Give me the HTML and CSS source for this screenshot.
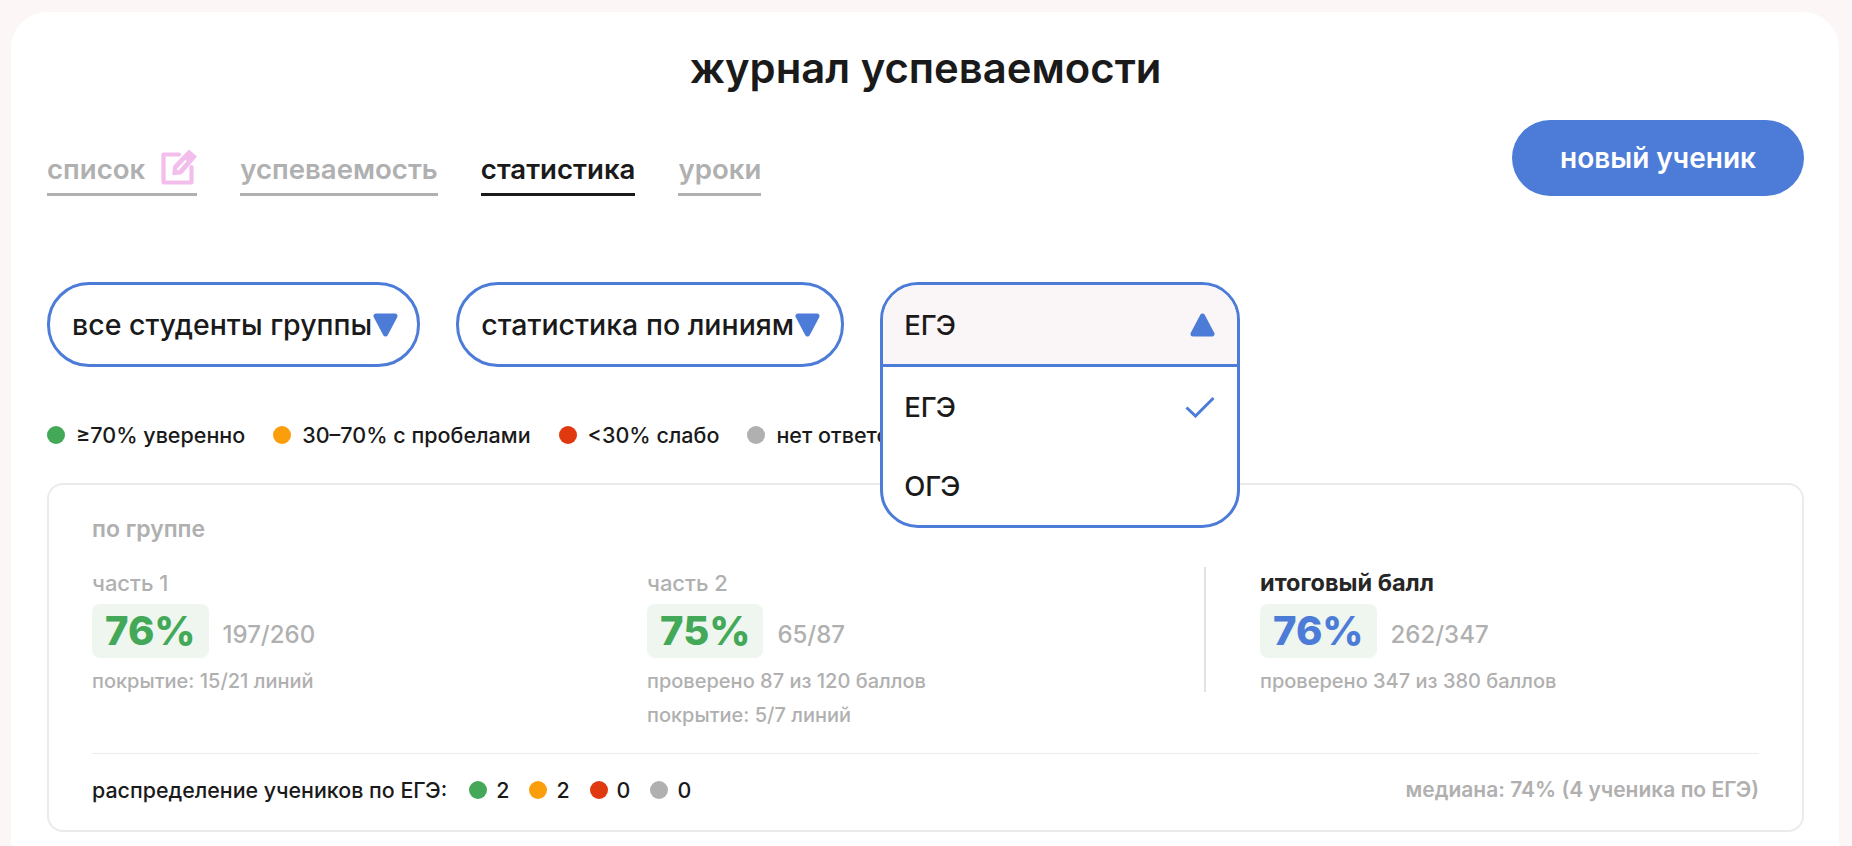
FILE: index.html
```html
<!DOCTYPE html>
<html lang="ru">
<head>
    <meta charset="UTF-8">
    <meta name="viewport" content="width=device-width, initial-scale=1.0">
    <title>журнал успеваемости</title>
    <link rel="stylesheet" href="styles.css">
</head>
<body>
<main class="journal">
    <h1 class="journal-title">журнал успеваемости</h1>

    <div class="toolbar">
        <nav class="tabs">
            <a class="tab">список
                <svg class="tab-icon" viewBox="0 0 36 36" fill="none" stroke="#f3bdec">
                    <path d="M18 5.500H2.500v28h28V18" stroke-width="4.200" stroke-linejoin="round" stroke-linecap="round"/>
                    <path d="M12 25.500l1-8.500L28 1.500l7 6L20.500 24.500z" fill="#f3bdec" stroke-width="1.500" stroke-linejoin="round"/>
                    <path d="M16.500 21l8.500-9.500" stroke="#fff" stroke-width="2"/>
                </svg>
            </a>
            <a class="tab">успеваемость</a>
            <a class="tab tab-active">статистика</a>
            <a class="tab">уроки</a>
        </nav>
        <button class="new-student" type="button">новый ученик</button>
    </div>

    <div class="filters">
        <div class="pill">все студенты группы
            <svg class="arrow" viewBox="0 0 25 24"><path d="M3 3h19L12.500 21z"/></svg>
        </div>
        <div class="pill">статистика по линиям
            <svg class="arrow" viewBox="0 0 25 24"><path d="M3 3h19L12.500 21z"/></svg>
        </div>
        <div class="select-slot">
            <div class="select">
                <div class="select-head">ЕГЭ
                    <svg class="arrow" viewBox="0 0 25 24"><path d="M12.500 3L22 21H3z"/></svg>
                </div>
                <div class="select-option">ЕГЭ
                    <svg class="check" viewBox="0 0 30 22" fill="none"><path d="M1.500 11.500l9 8.500L28.500 2" stroke="#4d7cd8" stroke-width="3"/></svg>
                </div>
                <div class="select-option">ОГЭ</div>
            </div>
        </div>
    </div>

    <ul class="legend">
        <li class="legend-item"><span class="dot dot-green"></span>≥70% уверенно</li>
        <li class="legend-item"><span class="dot dot-orange"></span>30–70% с пробелами</li>
        <li class="legend-item"><span class="dot dot-red"></span>&lt;30% слабо</li>
        <li class="legend-item"><span class="dot dot-grey"></span>нет ответов</li>
    </ul>

    <section class="panel">
        <div class="panel-title">по группе</div>
        <div class="parts">
            <div class="part">
                <div class="part-label">часть 1</div>
                <div class="score-row">
                    <span class="score score-green">76%</span>
                    <span class="score-count">197/260</span>
                </div>
                <div class="part-note">покрытие: 15/21 линий</div>
            </div>
            <div class="part">
                <div class="part-label">часть 2</div>
                <div class="score-row">
                    <span class="score score-green">75%</span>
                    <span class="score-count">65/87</span>
                </div>
                <div class="part-note">проверено 87 из 120 баллов</div>
                <div class="part-note">покрытие: 5/7 линий</div>
            </div>
            <div class="part part-total">
                <div class="part-label part-label-dark">итоговый балл</div>
                <div class="score-row">
                    <span class="score score-blue">76%</span>
                    <span class="score-count">262/347</span>
                </div>
                <div class="part-note">проверено 347 из 380 баллов</div>
            </div>
        </div>
        <div class="panel-footer">
            <div class="distribution">
                <span class="distribution-label">распределение учеников по ЕГЭ:</span>
                <span class="distribution-item"><span class="dot dot-green"></span>2</span>
                <span class="distribution-item"><span class="dot dot-orange"></span>2</span>
                <span class="distribution-item"><span class="dot dot-red"></span>0</span>
                <span class="distribution-item"><span class="dot dot-grey"></span>0</span>
            </div>
            <div class="median">медиана: 74% (4 ученика по ЕГЭ)</div>
        </div>
    </section>
</main>
</body>
</html>
```

FILE: styles.css
```css
* {
    box-sizing: border-box;
}
html, body {
    height: 100%;
    overflow: hidden;
}
body {
    margin: 0;
    padding: 12px 13px 0 11px;
    background-color: #fcf6f7;
    color: #1a1a1a;
    font-family: "Inter", "Noto Sans", sans-serif;
}
.journal {
    height: 100%;
    padding: 0 35px 0 36px;
    background-color: #fff;
    border-radius: 36px 36px 0 0;
}
.journal-title {
    margin: 0;
    padding-top: 33px;
    height: 108px;
    font-size: 41.800px;
    line-height: 46px;
    font-weight: 600;
    text-align: center;
}
.toolbar {
    display: flex;
    justify-content: space-between;
    align-items: flex-end;
}
.tabs {
    display: flex;
    gap: 43px;
}
.tab {
    display: flex;
    align-items: center;
    gap: 16px;
    height: 46px;
    padding-bottom: 5px;
    border-bottom: 3px solid #b0b0b0;
    color: #b0b0b0;
    font-size: 27.600px;
    font-weight: 600;
}
.tab-active {
    border-color: #1a1a1a;
    color: #1a1a1a;
}
.tab-icon {
    width: 36px;
    height: 36px;
    margin-top: -4px;
}
.new-student {
    width: 292px;
    height: 76px;
    border: none;
    border-radius: 38px;
    background-color: #4d7cd8;
    color: #fff;
    font-family: inherit;
    font-size: 28px;
    font-weight: 600;
}
.filters {
    display: flex;
    gap: 36px;
    margin-top: 86px;
}
.pill {
    display: flex;
    align-items: center;
    gap: 1px;
    height: 85px;
    padding: 0 19px 0 22px;
    border: 3px solid #4d7cd8;
    border-radius: 42px;
    font-size: 28.500px;
    font-weight: 500;
}
.pill + .pill {
    padding-right: 21px;
}
.arrow {
    flex: none;
    width: 25px;
    height: 24px;
    fill: #4d7cd8;
    stroke: #4d7cd8;
    stroke-width: 5;
    stroke-linejoin: round;
}
.select-slot {
    position: relative;
    width: 360px;
    height: 85px;
}
.select {
    position: absolute;
    top: 0;
    left: 0;
    z-index: 2;
    width: 360px;
    height: 246px;
    border: 3px solid #4d7cd8;
    border-radius: 38px;
    overflow: hidden;
    background-color: #fff;
    font-size: 27.500px;
    font-weight: 500;
}
.select-head {
    display: flex;
    justify-content: space-between;
    align-items: center;
    height: 82px;
    padding: 0 22px 0 21px;
    border-bottom: 3px solid #4d7cd8;
    background-color: #faf5f6;
}
.select-option {
    display: flex;
    justify-content: space-between;
    align-items: center;
    height: 79px;
    padding: 0 22px 0 21px;
}
.check {
    width: 30px;
    height: 22px;
}
.legend {
    display: flex;
    gap: 28px;
    margin: 0;
    padding: 56px 0 0;
    list-style: none;
    height: 116px;
    font-size: 21.500px;
    font-weight: 500;
}
.legend-item {
    display: flex;
    align-items: center;
    gap: 11px;
    height: 24px;
    white-space: nowrap;
}
.dot {
    flex: none;
    width: 18px;
    height: 18px;
    border-radius: 50%;
}
.dot-green {
    background-color: #43a858;
}
.dot-orange {
    background-color: #fb9e0c;
}
.dot-red {
    background-color: #e0380f;
}
.dot-grey {
    background-color: #b0b0b0;
}
.panel {
    height: 349px;
    padding: 32px 43px 0;
    border: 2px solid #ebebeb;
    border-radius: 16px;
}
.panel-title {
    color: #b0b0b0;
    font-size: 23px;
    line-height: 24px;
    font-weight: 600;
}
.parts {
    display: grid;
    grid-template-columns: 555px 557px 1fr;
    height: 186px;
    margin-top: 26px;
}
.part-total {
    height: 125px;
    padding-left: 54px;
    border-left: 2px solid #e2e2e2;
}
.part-label {
    margin-top: 4px;
    color: #b0b0b0;
    font-size: 22px;
    line-height: 24px;
    font-weight: 500;
}
.part-label-dark {
    color: #262626;
    font-size: 23.500px;
    font-weight: 700;
}
.score-row {
    display: flex;
    align-items: flex-end;
    gap: 14px;
    margin-top: 9px;
}
.score {
    height: 54px;
    padding: 0 13px;
    border-radius: 8px;
    background-color: #eef6ef;
    font-size: 40px;
    line-height: 54px;
    font-weight: 800;
}
.score-green {
    color: #43a858;
}
.score-blue {
    color: #4d7cd8;
}
.score-count {
    padding-bottom: 9px;
    color: #b0b0b0;
    font-size: 24px;
    line-height: 28px;
    font-weight: 500;
}
.part-note {
    margin-top: 13px;
    color: #b0b0b0;
    font-size: 20px;
    line-height: 21px;
    font-weight: 500;
}
.panel-footer {
    display: flex;
    justify-content: space-between;
    align-items: center;
    height: 72px;
    border-top: 1px solid #ececec;
}
.distribution {
    display: flex;
    align-items: center;
    gap: 20px;
    font-size: 21.400px;
    font-weight: 500;
}
.distribution-label {
    margin-right: 2px;
}
.distribution-item {
    display: flex;
    align-items: center;
    gap: 9px;
}
.median {
    color: #b0b0b0;
    font-size: 21px;
    font-weight: 600;
}
```
